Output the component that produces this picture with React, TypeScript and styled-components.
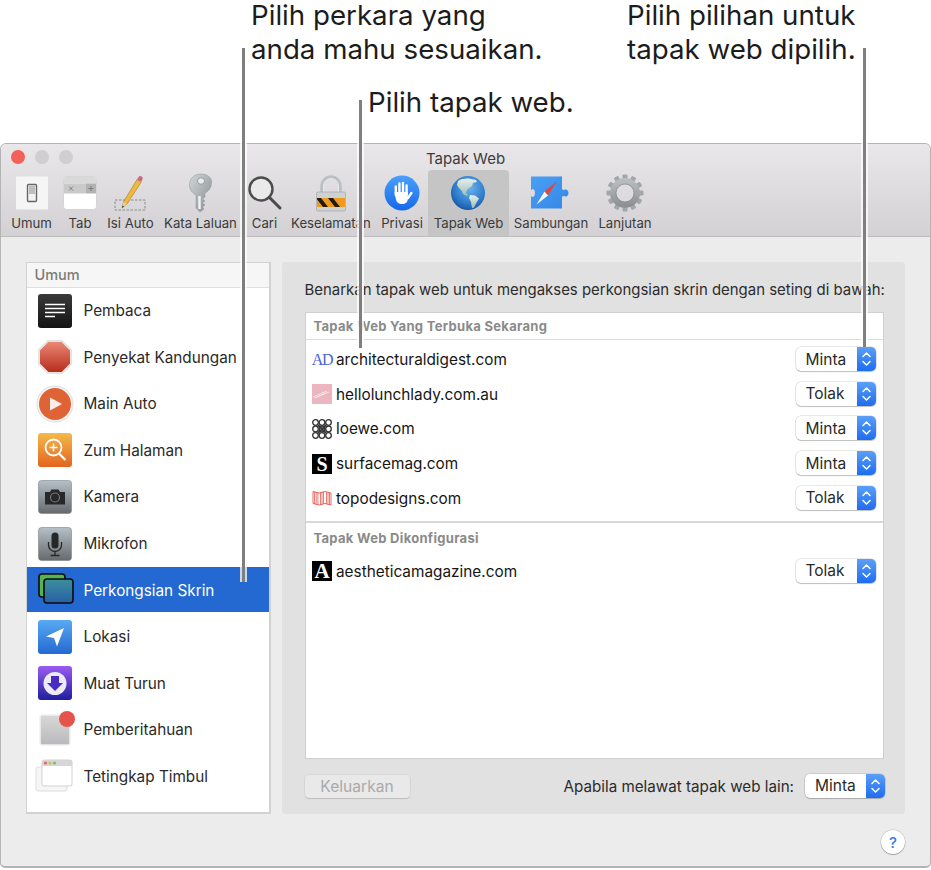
import React from "react";
import styled, { createGlobalStyle } from "styled-components";

const FONT = `Inter, "Liberation Sans", Arial, sans-serif`;

const Global = createGlobalStyle`
  * { box-sizing: border-box; }
  html, body { margin: 0; padding: 0; background: #fff; }
  body { font-family: ${FONT}; color: #262626; }
`;

const Page = styled.div`
  position: relative;
  width: 931px;
  height: 870px;
  padding-top: 143px;
  overflow: hidden;
`;

const Callout = styled.div<{ $left: number; $top: number }>`
  position: absolute;
  left: ${(p) => p.$left}px;
  top: ${(p) => p.$top}px;
  display: flex;
  flex-direction: column;
  gap: 3.5px;
  font-size: 27.7px;
  line-height: 30px;
  color: #1c1c1c;
  white-space: nowrap;
  z-index: 3;
`;

const Leader = styled.div<{ $left: number; $top: number; $height: number }>`
  position: absolute;
  left: ${(p) => p.$left}px;
  top: ${(p) => p.$top}px;
  height: ${(p) => p.$height}px;
  width: 2.5px;
  background: #7f7f7f;
  box-shadow: 2px 0 0 rgba(255, 255, 255, 0.75), -2px 0 0 rgba(255, 255, 255, 0.75);
  z-index: 2;
`;

const Window = styled.div`
  width: 931px;
  height: 725px;
  border: 1px solid #b4b4b4;
  border-bottom-width: 2px;
  border-radius: 6px 6px 5px 5px;
  background: #ececec;
  display: flex;
  flex-direction: column;
`;

const Chrome = styled.div`
  height: 93px;
  flex: none;
  background: linear-gradient(#e9e7e9, #d3d1d3);
  border-bottom: 1px solid #bdbdbd;
  border-radius: 5px 5px 0 0;
`;

const TitleRow = styled.div`
  height: 26px;
  display: grid;
  grid-template-columns: 1fr auto 1fr;
  align-items: center;
  padding: 0 10px;
`;

const Lights = styled.div`
  display: flex;
  gap: 10px;
`;

const Light = styled.span<{ $color: string }>`
  width: 14px;
  height: 14px;
  border-radius: 50%;
  background: ${(p) => p.$color};
`;

const Title = styled.div`
  font-size: 15px;
  color: #3c3c3c;
  padding-top: 2px;
`;

const Toolbar = styled.div`
  display: flex;
  height: 66px;
  padding-left: 5px;
`;

const Tool = styled.div<{ $width: number; $active?: boolean }>`
  width: ${(p) => p.$width}px;
  flex: none;
  display: flex;
  flex-direction: column;
  align-items: center;
  border-radius: ${(p) => (p.$active ? "4px 4px 0 0" : "0")};
  background: ${(p) => (p.$active ? "#c6c5c6" : "transparent")};
`;

const ToolIcon = styled.div`
  height: 45px;
  display: flex;
  align-items: center;
  justify-content: center;
`;

const ToolLabel = styled.div`
  font-size: 13.2px;
  line-height: 16px;
  color: #3a3a3a;
  white-space: nowrap;
`;

const Body = styled.div`
  flex: 1;
  padding: 25px 25px 0 24.5px;
  display: flex;
  flex-direction: column;
`;

const Columns = styled.div`
  display: flex;
  gap: 11.5px;
  height: 552px;
`;

const Sidebar = styled.div`
  width: 245px;
  flex: none;
  background: #fff;
  border: 2px solid #d2d2d2;
  border-width: 1.5px 2px 2px 1.5px;
`;

const SideHeader = styled.div`
  height: 24.5px;
  padding: 2px 0 0 8px;
  background: #f6f6f6;
  border-bottom: 1px solid #dedede;
  font-size: 14.5px;
  font-weight: 500;
  line-height: 20px;
  color: #7c7c7c;
`;

const SideRow = styled.div<{ $active?: boolean }>`
  height: 46.55px;
  display: flex;
  align-items: center;
  gap: 12px;
  padding-left: 11px;
  font-size: 15.3px;
  color: ${(p) => (p.$active ? "#fff" : "#2a2a2a")};
  background: ${(p) => (p.$active ? "linear-gradient(#2469d1, #2469d1) no-repeat 0 0 / 100% 45px" : "transparent")};
  white-space: nowrap;
`;

const SideIcon = styled.div`
  width: 34px;
  height: 34px;
  flex: none;
`;

const Panel = styled.div`
  width: 623px;
  flex: none;
  background: #e1e1e1;
  border-radius: 4px;
  padding: 0 21px 0 22.5px;
`;

const Intro = styled.div`
  height: 50px;
  padding-top: 18px;
  font-size: 14.95px;
  line-height: 20px;
  color: #2c2c2c;
  white-space: nowrap;
`;

const Table = styled.div`
  height: 447px;
  background: #fff;
  border: 1.5px solid #cfcfcf;
`;

const GroupHeader = styled.div<{ $rule?: boolean }>`
  height: ${(p) => (p.$rule ? "31px" : "27px")};
  display: flex;
  align-items: center;
  padding-left: 8px;
  font-size: 13px;
  font-weight: 700;
  letter-spacing: 0.3px;
  color: #8a8a8a;
  border-bottom: ${(p) => (p.$rule ? "none" : "1.5px solid #dcdcdc")};
`;

const SiteList = styled.div`
  padding: 2.5px 0 6px;
`;

const SiteRow = styled.div`
  height: 34.6px;
  display: flex;
  align-items: center;
  padding: 0 7.5px 0 6.5px;
  font-size: 15.35px;
  color: #161616;
`;

const SiteName = styled.span`
  margin-left: 4px;
  flex: 1;
`;

const Rule = styled.div`
  height: 1.5px;
  background: #d8d8d8;
`;

const Fav = styled.span<{ $bg: string; $fg: string; $size: number; $thin?: boolean }>`
  width: 20px;
  height: 20px;
  flex: none;
  display: flex;
  align-items: center;
  justify-content: center;
  background: ${(p) => p.$bg};
  color: ${(p) => p.$fg};
  font-family: "Liberation Serif", serif;
  font-weight: ${(p) => (p.$thin ? 400 : 700)};
  font-size: ${(p) => p.$size}px;
  letter-spacing: ${(p) => (p.$thin ? "-1.4px" : "0")};
  line-height: 1;
`;

const SelectBox = styled.div<{ $width: number }>`
  width: ${(p) => p.$width}px;
  height: 24px;
  flex: none;
  margin-top: -1px;
  display: flex;
  align-items: center;
  justify-content: space-between;
  background: #fff;
  border-radius: 5px;
  box-shadow: 0 0 0 0.5px rgba(0, 0, 0, 0.18), 0 1px 1px rgba(0, 0, 0, 0.18);
  font-size: 15.5px;
  color: #2a2a2a;
  padding-left: 10px;
  overflow: hidden;
`;

const Stepper = styled.div`
  width: 19px;
  height: 24px;
  background: linear-gradient(#5b9ff8, #1d6df0);
  display: flex;
  align-items: center;
  justify-content: center;
`;

const BottomBar = styled.div`
  display: flex;
  align-items: center;
  height: 23px;
  margin-top: 15.5px;
  margin-right: -1px;
`;

const RemoveButton = styled.div`
  width: 105px;
  height: 23px;
  display: flex;
  align-items: center;
  justify-content: center;
  background: #e9e9e9;
  border-radius: 4px;
  box-shadow: 0 0 0 0.5px rgba(0, 0, 0, 0.08), 0 1px 1px rgba(0, 0, 0, 0.12);
  font-size: 15.6px;
  color: #a9a9a9;
`;

const OtherLabel = styled.div`
  margin-left: auto;
  margin-right: 11px;
  font-size: 15.2px;
  color: #2c2c2c;
`;

const Footer = styled.div`
  display: flex;
  justify-content: flex-end;
  padding-top: 16px;
`;

const HelpButton = styled.div`
  width: 24px;
  height: 24px;
  border-radius: 50%;
  background: #fff;
  box-shadow: 0 0 0 0.5px rgba(0, 0, 0, 0.2), 0 1px 1px rgba(0, 0, 0, 0.25);
  display: flex;
  align-items: center;
  justify-content: center;
  font-size: 15px;
  font-weight: 500;
  color: #2f7bf0;
`;

const Chevrons = () => (
  <svg width="11" height="18" viewBox="0 0 11 18" fill="none" stroke="#fff" strokeWidth="1.5" strokeLinecap="round" strokeLinejoin="round">
    <path d="M2 6.5 5.5 3 9 6.5" />
    <path d="M2 11.5 5.5 15 9 11.5" />
  </svg>
);

const Select = ({ value, width = 80 }: { value: string; width?: number }) => (
  <SelectBox $width={width}>
    {value}
    <Stepper>
      <Chevrons />
    </Stepper>
  </SelectBox>
);

/* ---------- toolbar drawings ---------- */

const GeneralIcon = () => (
  <svg width="34" height="36" viewBox="0 0 34 36">
    <rect x="1" y="1.500" width="32" height="33" rx="1" fill="#f6f5f6" />
    <rect x="12.500" y="9.500" width="9" height="17" rx="1" fill="#f2f2f2" stroke="#666" strokeWidth="1.400" />
    <rect x="14" y="11" width="6" height="8" fill="#bdbdbd" />
  </svg>
);

const TabsIcon = () => (
  <svg width="34" height="36" viewBox="0 0 34 36">
    <rect x="0.500" y="1.500" width="33" height="33" rx="3" fill="#fff" stroke="#d5d5d5" />
    <path d="M1 4.500a3 3 0 0 1 3-3h26a3 3 0 0 1 3 3v4H1z" fill="#dad9da" />
    <rect x="1" y="8.500" width="22" height="10" fill="#cbcacb" />
    <rect x="23" y="8.500" width="10" height="10" fill="#b3b2b3" />
    <path d="M6 11.500l4 4M10 11.500l-4 4M28 11v5M25.500 13.500h5" stroke="#777" strokeWidth="0.900" fill="none" />
  </svg>
);

const AutofillIcon = () => (
  <svg width="34" height="38" viewBox="0 0 34 38">
    <rect x="1" y="26" width="30" height="10" fill="none" stroke="#8a8a8a" strokeDasharray="2.500 1.500" />
    <path d="M8 34 9.500 28 23 5.500l4.200 2.600L13 30z" fill="#f1b93b" stroke="#8c6a1d" strokeWidth="0.500" />
    <path d="M8 34 9.500 28l3.500 2z" fill="#e8cfa2" />
    <path d="M8 34l.6-2.400 1.500.9z" fill="#333" />
    <path d="M23 5.500l1.600-2.600a2 2 0 0 1 2.700-.6l.6.4a2 2 0 0 1 .6 2.700L27.200 8.100z" fill="#c96a86" />
  </svg>
);

const KeyIcon = () => (
  <svg width="26" height="40" viewBox="0 0 26 40">
    <defs>
      <linearGradient id="keyG" x1="0" y1="0" x2="1" y2="1">
        <stop offset="0" stopColor="#d2d7d8" />
        <stop offset="1" stopColor="#858c8e" />
      </linearGradient>
    </defs>
    <path d="M13 1C6 1 1.500 5.500 1.500 12c0 4.500 3 8.500 6.500 10v13l4 4 4-3-1.500-2 2.500-2-2.500-2 2.500-2-2.500-2 2.500-2v-4c3.500-1.500 6.500-5.500 6.500-10C24.500 5.500 20 1 13 1z" fill="url(#keyG)" stroke="#8e9496" strokeWidth="0.500" />
    <ellipse cx="13" cy="8" rx="3.500" ry="3.200" fill="#eceeee" stroke="#7d8284" strokeWidth="0.700" />
    <path d="M11.500 23v13" stroke="#f2f2f2" strokeWidth="2.500" />
  </svg>
);

const SearchIcon = () => (
  <svg width="36" height="36" viewBox="0 0 36 36">
    <circle cx="14" cy="14" r="11.500" fill="#f1f1f1" fillOpacity="0.6" stroke="#4c4c4c" strokeWidth="2.400" />
    <path d="M22.500 22.500 33 33" stroke="#4a4a4a" strokeWidth="3" strokeLinecap="round" />
  </svg>
);

const LockIcon = () => (
  <svg width="32" height="40" viewBox="0 0 32 40">
    <defs>
      <clipPath id="lockBand">
        <rect x="2" y="25" width="28" height="9" />
      </clipPath>
    </defs>
    <path d="M7 19v-6a9 9 0 0 1 18 0v6" fill="none" stroke="#bcc0c3" strokeWidth="3.500" />
    <path d="M8.500 19v-6a7.500 7.500 0 0 1 15 0v6" fill="none" stroke="#eef0f1" strokeWidth="0.800" />
    <rect x="1.500" y="19" width="29" height="19" rx="1.500" fill="#cfd0d1" stroke="#a0a0a0" strokeWidth="0.600" />
    <rect x="2" y="25" width="28" height="9" fill="#ef9a1e" />
    <g clipPath="url(#lockBand)" fill="#1f1a12">
      <path d="M1 25h5l7 9H8zM13 25h5l7 9h-5z" />
    </g>
  </svg>
);

const PrivacyIcon = () => (
  <svg width="36" height="36" viewBox="0 0 36 36">
    <defs>
      <linearGradient id="privG" x1="0" y1="0" x2="0" y2="1">
        <stop offset="0" stopColor="#4aa0fb" />
        <stop offset="1" stopColor="#1568ea" />
      </linearGradient>
    </defs>
    <circle cx="18" cy="18" r="17.500" fill="url(#privG)" />
    <g stroke="#fff" strokeWidth="2.400" strokeLinecap="round" fill="none">
      <path d="M11.800 20V11.500M15.400 18V8.500M19 18V8M22.600 19V10.500" />
      <path d="M24 23l3.400-5" />
    </g>
    <path d="M10.600 17h13.200v7c0 3-2.400 5-5.800 5-3.600 0-5.400-1.800-6-4.300z" fill="#fff" />
  </svg>
);

const GlobeIcon = () => (
  <svg width="36" height="36" viewBox="0 0 36 36" style={{ marginLeft: "-2px" }}>
    <defs>
      <radialGradient id="globeG" cx="0.55" cy="0.35" r="0.75">
        <stop offset="0" stopColor="#6db2ec" />
        <stop offset="0.6" stopColor="#2f7ccc" />
        <stop offset="1" stopColor="#14488f" />
      </radialGradient>
      <linearGradient id="landG" x1="0" y1="0" x2="0" y2="1">
        <stop offset="0" stopColor="#e6eff0" />
        <stop offset="1" stopColor="#9dbfb4" />
      </linearGradient>
    </defs>
    <circle cx="18" cy="18" r="17" fill="url(#globeG)" />
    <path d="M8 6c4-2.500 9-3 13-2l5 1 1 2-4 1-1 3-3 2-2 2-1 3 2 2-1 1-4-2-1-3-3-3-2-3z" fill="url(#landG)" />
    <path d="M20 20l5 .5 4 3-2.500 4-2.500 5-2 .5-1-6-2-4z" fill="url(#landG)" />
  </svg>
);

const ExtensionIcon = () => (
  <svg width="40" height="36" viewBox="0 0 40 36" style={{ marginLeft: "-4px" }}>
    <defs>
      <linearGradient id="extG" x1="0" y1="0" x2="1" y2="1">
        <stop offset="0" stopColor="#4a9ff5" />
        <stop offset="1" stopColor="#3488e6" />
      </linearGradient>
    </defs>
    <path d="M2 1.500h29a2 2 0 0 1 2 0v12.500c1 1.200 2 1 3 .6 2-.6 3.500 1.200 3.500 3.400s-1.500 4-3.500 3.400c-1-.4-2-.6-3 .6v11.500H2V21c1 1.200 3 1.200 3.500-.4.600-1.500.600-3.700 0-5.200C5 13.800 3 13.800 2 15z" fill="url(#extG)" />
    <path d="M28 6 15.500 16.500l3.500 4z" fill="#e4463b" />
    <path d="M7.500 29.500 19 20.500l-3.500-4z" fill="#f7f7f7" />
  </svg>
);

const GearIcon = () => (
  <svg width="38" height="38" viewBox="0 0 38 38">
    <defs>
      <linearGradient id="gearG" x1="0" y1="0" x2="0" y2="1">
        <stop offset="0" stopColor="#b8bcbe" />
        <stop offset="1" stopColor="#8d9194" />
      </linearGradient>
    </defs>
    {Array.from({ length: 12 }, (_, i) => (
      <rect key={i} x="16.500" y="0.500" width="5" height="8" rx="1" fill="#a3a7a9" transform={`rotate(${i * 30} 19 19)`} />
    ))}
    <circle cx="19" cy="19" r="12" fill="none" stroke="url(#gearG)" strokeWidth="6" />
    <circle cx="19" cy="19" r="9" fill="none" stroke="#777b7d" strokeWidth="0.600" />
  </svg>
);

/* ---------- sidebar drawings ---------- */

const Grad = ({ id, from, to }: { id: string; from: string; to: string }) => (
  <defs>
    <linearGradient id={id} x1="0" y1="0" x2="0" y2="1">
      <stop offset="0" stopColor={from} />
      <stop offset="1" stopColor={to} />
    </linearGradient>
  </defs>
);

const ReaderIcon = () => (
  <svg width="34" height="34" viewBox="0 0 34 34">
    <Grad id="rdG" from="#3a3a3a" to="#141414" />
    <rect x="0" y="0" width="34" height="34" rx="3" fill="url(#rdG)" />
    <path d="M7 10.500h20M7 14.500h20M7 18.500h20M7 22.500h10" stroke="#fff" strokeWidth="1.600" />
  </svg>
);

const BlockerIcon = () => (
  <svg width="34" height="34" viewBox="0 0 34 34">
    <Grad id="blG" from="#ec8a78" to="#b52a18" />
    <path d="M10 1h14l9 9v14l-9 9H10l-9-9V10z" fill="url(#blG)" stroke="#e6e2e1" strokeWidth="2" />
  </svg>
);

const AutoplayIcon = () => (
  <svg width="38" height="38" viewBox="0 0 38 38" style={{ margin: "-2px" }}>
    <circle cx="19" cy="19" r="18" fill="#f4f4f4" stroke="#dedede" />
    <circle cx="19" cy="19" r="16" fill="#df6335" />
    <path d="M14 12.500 26 19l-12 6.500z" fill="#f8efe9" />
  </svg>
);

const ZoomIcon = () => (
  <svg width="34" height="34" viewBox="0 0 34 34">
    <Grad id="zmG" from="#f5b94a" to="#e2641f" />
    <rect width="34" height="34" rx="3" fill="url(#zmG)" />
    <circle cx="15.500" cy="14.500" r="8" fill="none" stroke="#fff" strokeWidth="1.800" />
    <path d="M21 20.500l6.500 6.500" stroke="#fff" strokeWidth="2.200" />
    <path d="M15.500 10.500v8M11.500 14.500h8" stroke="#fff" strokeWidth="1.500" />
  </svg>
);

const CameraIcon = () => (
  <svg width="34" height="34" viewBox="0 0 34 34">
    <Grad id="caG" from="#b4c0c8" to="#666a6c" />
    <rect x="0.500" y="0.500" width="33" height="33" rx="3" fill="url(#caG)" stroke="#7c8388" strokeWidth="0.600" />
    <path d="M7 12h5l1.500-2.500h7L22 12h5v12.500H7z" fill="#272829" />
    <circle cx="17" cy="17.500" r="4.500" fill="none" stroke="#777" strokeWidth="1.200" />
  </svg>
);

const MicIcon = () => (
  <svg width="34" height="34" viewBox="0 0 34 34">
    <Grad id="miG" from="#b4c0c8" to="#666a6c" />
    <rect x="0.500" y="0.500" width="33" height="33" rx="3" fill="url(#miG)" stroke="#7c8388" strokeWidth="0.600" />
    <rect x="13.500" y="5.500" width="7" height="16" rx="3.500" fill="#262728" />
    <path d="M10.500 15v3a6.500 6.500 0 0 0 13 0v-3M17 24.500V28M12.500 28.500h9" fill="none" stroke="#262728" strokeWidth="1.300" />
  </svg>
);

const ScreenIcon = () => (
  <svg width="36" height="32" viewBox="0 0 36 32">
    <Grad id="scG" from="#3a8f9c" to="#2a5fa8" />
    <rect x="1" y="1" width="26" height="23" rx="3" fill="#57b257" stroke="#0b0b0b" strokeWidth="1.600" />
    <rect x="6" y="6" width="29" height="24" rx="3" fill="url(#scG)" stroke="#0b0b0b" strokeWidth="1.600" />
  </svg>
);

const LocationIcon = () => (
  <svg width="34" height="34" viewBox="0 0 34 34">
    <Grad id="loG" from="#58aaf3" to="#2468d2" />
    <rect width="34" height="34" rx="3" fill="url(#loG)" />
    <path d="M26 8 8 16.500l8 1.500 3 8.500z" fill="#fff" />
  </svg>
);

const DownloadIcon = () => (
  <svg width="34" height="34" viewBox="0 0 34 34">
    <Grad id="dlG" from="#9a5cf0" to="#1f1f9e" />
    <rect width="34" height="34" rx="3" fill="url(#dlG)" />
    <circle cx="17" cy="17.500" r="11.500" fill="#eceaf2" />
    <path d="M13 10h8v7h4l-8 8-8-8h4z" fill="#4a2bc2" />
  </svg>
);

const NoticeWrap = styled.div`
  position: relative;
  width: 34px;
  height: 34px;
`;

const NoticeDot = styled.span`
  position: absolute;
  top: -3px;
  right: -3px;
  width: 16px;
  height: 16px;
  border-radius: 50%;
  background: #e5534c;
`;

const NoticeIcon = () => (
  <NoticeWrap>
    <svg width="32" height="32" viewBox="0 0 32 32" style={{ display: "block", margin: "1px 0 0 1px" }}>
      <Grad id="ntG" from="#d8d8d9" to="#b9b9bb" />
      <rect x="1" y="1" width="30" height="30" rx="2" fill="url(#ntG)" stroke="#f0f0f0" strokeWidth="1.600" />
    </svg>
    <NoticeDot />
  </NoticeWrap>
);

const PopupIcon = () => (
  <svg width="38" height="34" viewBox="0 0 38 34" style={{ marginLeft: "-3px" }}>
    <rect x="1" y="8" width="31" height="24" rx="2" fill="#f6f6f6" stroke="#dedede" />
    <rect x="7" y="1" width="30" height="26" rx="2" fill="#fff" stroke="#d2d2d2" />
    <path d="M7 3a2 2 0 0 1 2-2h26a2 2 0 0 1 2 2v4H7z" fill="#d6d6d6" />
    <circle cx="10.500" cy="4" r="1.600" fill="#df6a60" />
    <circle cx="15" cy="4" r="1.600" fill="#e8b24f" />
    <circle cx="19.500" cy="4" r="1.600" fill="#78c267" />
  </svg>
);

/* ---------- favicons ---------- */

const LunchFav = () => (
  <svg width="20" height="20" viewBox="0 0 20 20">
    <rect width="20" height="20" fill="#ecb6c0" />
    <path d="M1 13 15 7M3 14l14-6M5 13l9-4" stroke="#f8e4e8" strokeWidth="1" />
  </svg>
);

const LoeweFav = () => (
  <svg width="20" height="20" viewBox="0 0 20 20" fill="none" stroke="#333" strokeWidth="1.300">
    {[3.500, 10, 16.500].flatMap((x) =>
      [3.500, 10, 16.500].map((y) => <circle key={`${x}-${y}`} cx={x} cy={y} r="2.800" />)
    )}
    <path d="M6 6l8 8M14 6l-8 8" strokeWidth="1.800" />
  </svg>
);

const TopoFav = () => (
  <svg width="20" height="20" viewBox="0 0 20 20" fill="none" stroke="#e0473f" strokeWidth="0.800">
    <path d="M1 3.500l6 1.500 6-1.500 6 1.500v12l-6-1.500-6 1.500-6-1.500z" />
    <path d="M2.500 4v12M4.200 4v12.500M5.900 4.500v12.500M8.500 4.500V17M10 4v12.500M11.500 4v12M14.500 4v12M16 4.500v12M17.500 4.500v12" strokeWidth="0.700" />
  </svg>
);

const tools = [
  { label: "Umum", width: 51, icon: <GeneralIcon /> },
  { label: "Tab", width: 46, icon: <TabsIcon /> },
  { label: "Isi Auto", width: 55, icon: <AutofillIcon /> },
  { label: "Kata Laluan", width: 85, icon: <KeyIcon /> },
  { label: "Cari", width: 43, icon: <SearchIcon /> },
  { label: "Keselamatan", width: 90, icon: <LockIcon /> },
  { label: "Privasi", width: 52, icon: <PrivacyIcon /> },
  { label: "Tapak Web", width: 81, icon: <GlobeIcon />, active: true },
  { label: "Sambungan", width: 84, icon: <ExtensionIcon /> },
  { label: "Lanjutan", width: 64, icon: <GearIcon /> },
];

const sections = [
  { label: "Pembaca", icon: <ReaderIcon /> },
  { label: "Penyekat Kandungan", icon: <BlockerIcon /> },
  { label: "Main Auto", icon: <AutoplayIcon /> },
  { label: "Zum Halaman", icon: <ZoomIcon /> },
  { label: "Kamera", icon: <CameraIcon /> },
  { label: "Mikrofon", icon: <MicIcon /> },
  { label: "Perkongsian Skrin", icon: <ScreenIcon />, active: true },
  { label: "Lokasi", icon: <LocationIcon /> },
  { label: "Muat Turun", icon: <DownloadIcon /> },
  { label: "Pemberitahuan", icon: <NoticeIcon /> },
  { label: "Tetingkap Timbul", icon: <PopupIcon /> },
];

const openSites = [
  { name: "architecturaldigest.com", value: "Minta", fav: <Fav $bg="transparent" $fg="#4a63d8" $size={16} $thin>AD</Fav> },
  { name: "hellolunchlady.com.au", value: "Tolak", fav: <LunchFav /> },
  { name: "loewe.com", value: "Minta", fav: <LoeweFav /> },
  { name: "surfacemag.com", value: "Minta", fav: <Fav $bg="#000" $fg="#fff" $size={20}>S</Fav> },
  { name: "topodesigns.com", value: "Tolak", fav: <TopoFav /> },
];

export default function App() {
  return (
    <Page>
      <Global />
      <Callout $left={251} $top={0}>
        <span>Pilih perkara yang</span>
        <span>anda mahu sesuaikan.</span>
      </Callout>
      <Callout $left={368} $top={87}>
        <span>Pilih tapak web.</span>
      </Callout>
      <Callout $left={627} $top={0}>
        <span>Pilih pilihan untuk</span>
        <span>tapak web dipilih.</span>
      </Callout>
      <Leader $left={242} $top={48} $height={534} />
      <Leader $left={359} $top={100} $height={248} />
      <Leader $left={863} $top={48} $height={299} />

      <Window>
        <Chrome>
          <TitleRow>
            <Lights>
              <Light $color="#f2605a" />
              <Light $color="#d0cfd0" />
              <Light $color="#d0cfd0" />
            </Lights>
            <Title>Tapak Web</Title>
          </TitleRow>
          <Toolbar>
            {tools.map((t) => (
              <Tool key={t.label} $width={t.width} $active={t.active}>
                <ToolIcon>{t.icon}</ToolIcon>
                <ToolLabel>{t.label}</ToolLabel>
              </Tool>
            ))}
          </Toolbar>
        </Chrome>

        <Body>
          <Columns>
            <Sidebar>
              <SideHeader>Umum</SideHeader>
              {sections.map((s) => (
                <SideRow key={s.label} $active={s.active}>
                  <SideIcon>{s.icon}</SideIcon>
                  {s.label}
                </SideRow>
              ))}
            </Sidebar>

            <Panel>
              <Intro>Benarkan tapak web untuk mengakses perkongsian skrin dengan seting di bawah:</Intro>
              <Table>
                <GroupHeader>Tapak Web Yang Terbuka Sekarang</GroupHeader>
                <SiteList>
                  {openSites.map((s) => (
                    <SiteRow key={s.name}>
                      {s.fav}
                      <SiteName>{s.name}</SiteName>
                      <Select value={s.value} />
                    </SiteRow>
                  ))}
                </SiteList>
                <Rule />
                <GroupHeader $rule>Tapak Web Dikonfigurasi</GroupHeader>
                <SiteRow>
                  <Fav $bg="#000" $fg="#fff" $size={21}>A</Fav>
                  <SiteName>aestheticamagazine.com</SiteName>
                  <Select value="Tolak" />
                </SiteRow>
              </Table>
              <BottomBar>
                <RemoveButton>Keluarkan</RemoveButton>
                <OtherLabel>Apabila melawat tapak web lain:</OtherLabel>
                <Select value="Minta" />
              </BottomBar>
            </Panel>
          </Columns>
          <Footer>
            <HelpButton>?</HelpButton>
          </Footer>
        </Body>
      </Window>
    </Page>
  );
}
